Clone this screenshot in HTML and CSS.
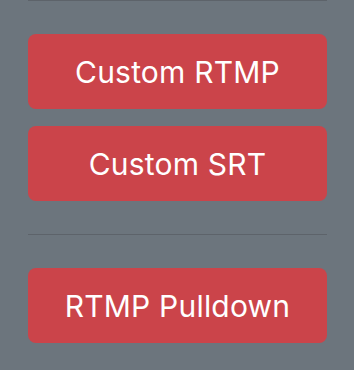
FILE: index.html
```html
<!DOCTYPE html>
<html lang="en">

<head>
  <meta charset="UTF-8">
  <meta name="viewport" content="width=device-width, initial-scale=1.0">
  <title>Outputs</title>

  <link rel="stylesheet" href="styles.css">

</head>

<body>

  <div class="panel">
    <hr class="divider">
    <div class="btnGroup">
      <button class="outBtn">Custom RTMP</button>
      <button class="outBtn">Custom SRT</button>
    </div>
    <hr class="divider">
    <div class="btnGroup">
      <button class="outBtn">RTMP Pulldown</button>
    </div>
  </div>

</body>

</html>
```

FILE: styles.css
```css
body {
  margin: 0;
  background-color: #6c757d;
  font-family: Inter, "Noto Sans", sans-serif;
}

.panel {
  padding: 0 27px 0 28px;
}

.divider {
  margin: 0;
  border: 0;
  border-top: 1px solid #5d636a;
  height: 0;
}

/* buttons */
.btnGroup {
  display: flex;
  flex-direction: column;
  gap: 17px;
  margin: 33px 0;
}

.outBtn {
  height: 75px;
  border: 0;
  border-radius: 8px;
  background-color: #cb444a;
  color: white;
  font-family: inherit;
  font-size: 30px;
  letter-spacing: 0.2px;
  cursor: pointer;
}
```
